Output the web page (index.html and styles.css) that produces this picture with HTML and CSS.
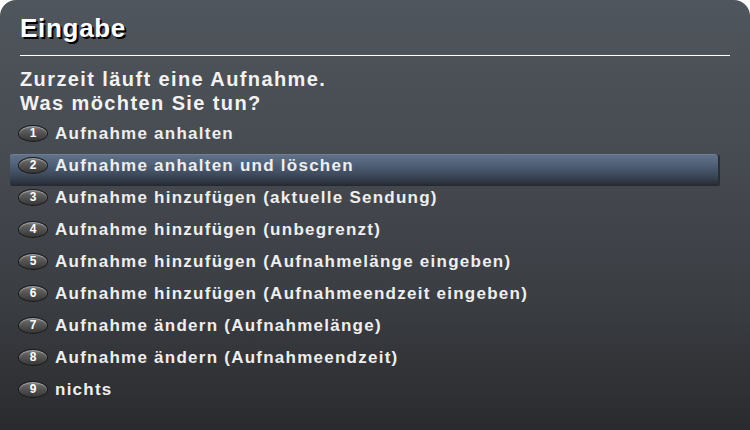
FILE: index.html
```html
<!DOCTYPE html>
<html lang="de">
<head>
<meta charset="utf-8">
<title>Eingabe</title>
<link rel="stylesheet" href="styles.css">
</head>
<body>
<div class="panel">
  <h1 class="title">Eingabe</h1>
  <div class="rule"></div>
  <p class="question">Zurzeit läuft eine Aufnahme.<br>Was möchten Sie tun?</p>
  <ul class="menu">
    <li class="item"><span class="key">1</span><span class="label">Aufnahme anhalten</span></li>
    <li class="item selected"><span class="key">2</span><span class="label">Aufnahme anhalten und löschen</span></li>
    <li class="item"><span class="key">3</span><span class="label">Aufnahme hinzufügen (aktuelle Sendung)</span></li>
    <li class="item"><span class="key">4</span><span class="label">Aufnahme hinzufügen (unbegrenzt)</span></li>
    <li class="item"><span class="key">5</span><span class="label">Aufnahme hinzufügen (Aufnahmelänge eingeben)</span></li>
    <li class="item"><span class="key">6</span><span class="label">Aufnahme hinzufügen (Aufnahmeendzeit eingeben)</span></li>
    <li class="item"><span class="key">7</span><span class="label">Aufnahme ändern (Aufnahmelänge)</span></li>
    <li class="item"><span class="key">8</span><span class="label">Aufnahme ändern (Aufnahmeendzeit)</span></li>
    <li class="item"><span class="key">9</span><span class="label">nichts</span></li>
  </ul>
</div>
</body>
</html>
```
FILE: styles.css
```css
html, body {
  margin: 0;
  padding: 0;
  background: #ffffff;
}
body {
  width: 750px;
  height: 430px;
  overflow: hidden;
  font-family: "Liberation Sans", Arial, sans-serif;
}
.panel {
  box-sizing: border-box;
  width: 750px;
  height: 430px;
  padding: 13px 10px 0 10px;
  border-radius: 16px 16px 0 0;
  background: linear-gradient(180deg, #50565d 0%, #474b52 35%, #3a3d42 70%, #2a2b2e 100%);
}
.title {
  margin: 0 0 0 10px;
  font-size: 26px;
  line-height: 30px;
  font-weight: bold;
  letter-spacing: 0.7px;
  color: #ffffff;
  text-shadow: 2px 2px 0 #000000;
}
.rule {
  height: 1px;
  margin: 12px 10px 0 10px;
  background: #ffffff;
}
.question {
  margin: 11px 0 0 10px;
  font-size: 20px;
  line-height: 24px;
  font-weight: bold;
  letter-spacing: 1.4px;
  color: #f2f2f2;
}
.menu {
  list-style: none;
  margin: 7px 20px 0 0;
  padding: 0;
}
.item {
  box-sizing: border-box;
  display: flex;
  align-items: flex-start;
  gap: 7px;
  height: 32px;
  padding: 0 0 9px 8px;
  font-size: 17px;
  line-height: 23px;
  font-weight: bold;
  letter-spacing: 1.25px;
  color: #eeeeee;
}
.item.selected {
  border-radius: 3px;
  background: linear-gradient(180deg, #627389 0%, #52627a 30%, #3e4a5b 65%, #2c323b 92%, #23272d 100%);
  box-shadow: inset -2px 0 0 #2a2f36, inset 0 1px 0 #6d7f96;
}
.key {
  flex: none;
  box-sizing: border-box;
  width: 30px;
  height: 17px;
  margin-top: 3px;
  border-radius: 50%;
  background: linear-gradient(180deg, #8a8a8a 0%, #606060 25%, #4a4a4a 65%, #363636 100%);
  border: 1px solid #1a1a1a;
  box-shadow: inset 0 1px 1px #a8a8a8;
  color: #ffffff;
  font-size: 12px;
  line-height: 15px;
  font-weight: bold;
  letter-spacing: 0;
  text-align: center;
}
.label {
  white-space: nowrap;
}
```
